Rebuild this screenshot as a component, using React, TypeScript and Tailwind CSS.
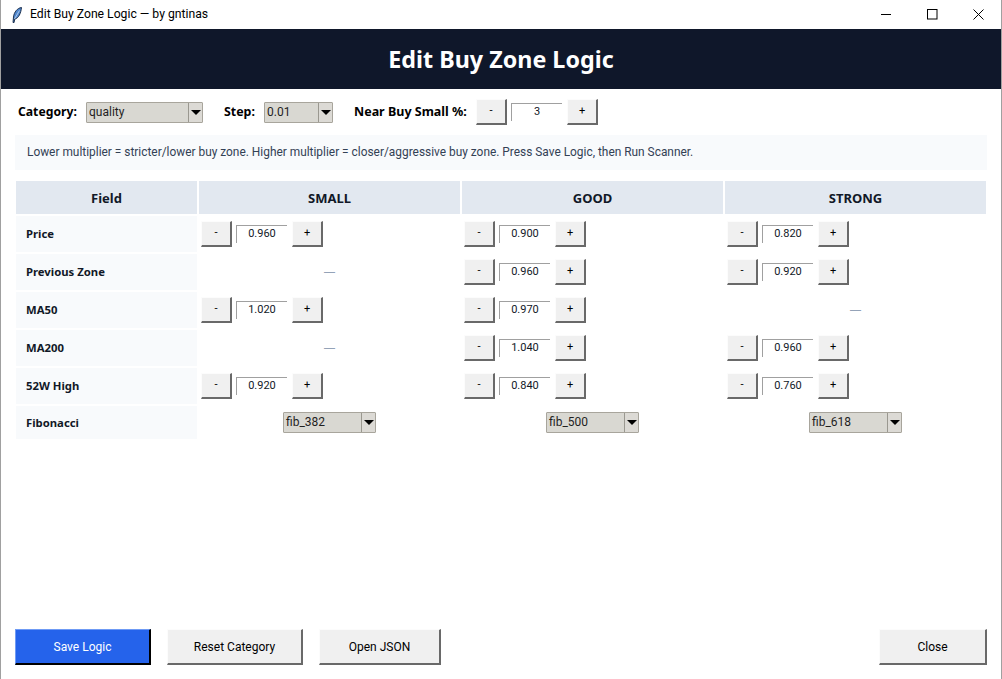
const FONT = "font-['Roboto','Noto_Sans',sans-serif]";
const BOLD = "font-['Noto_Sans','Open_Sans',sans-serif] font-bold";

const ROWS: { label: string; small: string | null; good: string; strong: string | null }[] = [
  { label: "Price", small: "0.960", good: "0.900", strong: "0.820" },
  { label: "Previous Zone", small: null, good: "0.960", strong: "0.920" },
  { label: "MA50", small: "1.020", good: "0.970", strong: null },
  { label: "MA200", small: null, good: "1.040", strong: "0.960" },
  { label: "52W High", small: "0.920", good: "0.840", strong: "0.760" },
];

function TkButton({ label, className = "" }: { label: string; className?: string }) {
  return (
    <button className={`flex items-center justify-center bg-[#f0f0f0] border border-t-[#fcfcfc] border-l-[#fcfcfc] border-r-2 border-b-2 border-r-[#696969] border-b-[#696969] text-black ${className}`}>
      {label}
    </button>
  );
}

function Stepper({ value }: { value: string }) {
  return (
    <div className="flex items-center">
      <TkButton label="-" className="w-[31px] h-[26px] text-[11px]" />
      <div className="ml-1 w-[51px] h-[26px] flex items-center justify-center text-[11px] text-[#111827]">
        <div className="w-full h-[18px] mb-[1px] border-t border-l border-[#a0a0a0] flex items-center justify-center">{value}</div>
      </div>
      <TkButton label="+" className="ml-[5px] w-[31px] h-[26px] text-[11px]" />
    </div>
  );
}

function Combo({ value, className = "" }: { value: string; className?: string }) {
  return (
    <div className={`flex h-[21px] border border-[#a8a59c] bg-[#d9d8d2] rounded-[1px] text-[12px] text-[#1f1f1f] ${className}`}>
      <div className="flex-1 pl-[2px] leading-[19px]">{value}</div>
      <div className="w-[14px] bg-[#dcdad5] border-l border-[#9a9890] flex items-center justify-center">
        <svg width="10" height="5" viewBox="0 0 10 5"><path d="M0 0h10L5 5z" fill="#000" /></svg>
      </div>
    </div>
  );
}

function Cell({ value }: { value: string | null }) {
  if (value === null) {
    return <div className="h-9 flex items-center justify-center font-['Noto_Sans',sans-serif] text-[12px] text-[#94a3b8]">—</div>;
  }
  return (
    <div className="h-9 flex items-center pl-[2px]">
      <Stepper value={value} />
    </div>
  );
}

function HeaderCell({ label }: { label: string }) {
  return (
    <div className={`h-[33px] pt-[2px] bg-[#e2e8f0] flex items-center justify-center text-[13px] text-[#111827] ${BOLD}`}>
      {label}
    </div>
  );
}

function Feather() {
  return (
    <svg width="10" height="16" viewBox="0 0 10 16">
      <path d="M9.500.500C5.500 1 2 5 1.500 10L1 15.500l1 .2.800-3.700C6.500 11.500 9 6 9.500.500z" fill="#4f86cc" stroke="#10233f" strokeWidth=".9" />
      <path d="M7.500 3.500L2.500 12" stroke="#d5e4f5" strokeWidth=".7" fill="none" />
    </svg>
  );
}

export default function App() {
  return (
    <div className={`${FONT} w-[1002px] h-[679px] flex flex-col bg-white border-x border-[#a0a0a0] overflow-hidden`}>
      {/* title bar */}
      <div className="h-[29px] flex items-center pl-[11px] shrink-0">
        <Feather />
        <span className="ml-2 text-[12.2px] text-black">Edit Buy Zone Logic — by gntinas</span>
        <div className="ml-auto flex items-center">
          <svg width="11" height="11" viewBox="0 0 11 11" className="mr-[35px]"><path d="M0 5.500h10" stroke="#000" /></svg>
          <svg width="11" height="11" viewBox="0 0 11 11" className="mr-[35px]"><rect x=".5" y=".5" width="9.500" height="9.500" fill="none" stroke="#000" /></svg>
          <svg width="11" height="11" viewBox="0 0 11 11" className="mr-[17px]"><path d="M.5.500l10 10M10.500.500l-10 10" stroke="#000" /></svg>
        </div>
      </div>

      {/* heading */}
      <div className={`h-[60px] shrink-0 bg-[#0f172a] flex items-center justify-center text-[23.3px] text-white ${BOLD}`}>
        Edit Buy Zone Logic
      </div>

      {/* toolbar */}
      <div className="flex items-center h-[26px] mt-[10px] pl-[17px] text-[12px] text-black shrink-0">
        <span className={`w-[68px] text-[12.2px] ${BOLD}`}>Category:</span>
        <Combo value="quality" className="w-[117px]" />
        <span className={`ml-[21px] w-[40px] text-[12.4px] ${BOLD}`}>Step:</span>
        <Combo value="0.01" className="w-[69px]" />
        <span className={`ml-[21px] w-[122px] text-[12.5px] ${BOLD}`}>Near Buy Small %:</span>
        <Stepper value="3" />
      </div>

      {/* note */}
      <div className="mt-[10px] mx-[14px] h-[35px] w-[972px] shrink-0 bg-[#f8fafc] flex items-center pl-3 text-[11.9px] text-[#334155]">
        Lower multiplier = stricter/lower buy zone. Higher multiplier = closer/aggressive buy zone. Press Save Logic, then Run Scanner.
      </div>

      {/* table */}
      <div className="mt-[11px] ml-[15px] grid grid-cols-[181px_261px_261px_261px] gap-[2px] shrink-0">
        <HeaderCell label="Field" />
        <HeaderCell label="SMALL" />
        <HeaderCell label="GOOD" />
        <HeaderCell label="STRONG" />
        {ROWS.map((r) => (
          <div key={r.label} className="contents">
            <div className={`h-9 bg-[#f8fafc] flex items-center pl-[10px] text-[11.3px] text-[#111827] ${BOLD}`}>{r.label}</div>
            <Cell value={r.small} />
            <Cell value={r.good} />
            <Cell value={r.strong} />
          </div>
        ))}
        <div className={`h-[33px] pt-[1px] bg-[#f8fafc] flex items-center pl-[10px] text-[11.3px] text-[#111827] ${BOLD}`}>Fibonacci</div>
        <div className="h-[33px] flex items-center justify-center"><Combo value="fib_382" className="w-[93px]" /></div>
        <div className="h-[33px] flex items-center justify-center"><Combo value="fib_500" className="w-[93px]" /></div>
        <div className="h-[33px] flex items-center justify-center"><Combo value="fib_618" className="w-[93px]" /></div>
      </div>

      {/* footer buttons */}
      <div className="mt-auto mb-[14px] mx-[14px] flex items-center shrink-0">
        <button className="w-[136px] h-9 bg-[#2563eb] border border-t-[#6f9bf5] border-l-[#6f9bf5] border-r-2 border-b-2 border-r-black border-b-black text-[12px] text-white">
          Save Logic
        </button>
        <TkButton label="Reset Category" className="ml-4 w-[136px] h-9 text-[12px]" />
        <TkButton label="Open JSON" className="ml-4 w-[122px] h-9 text-[12px]" />
        <TkButton label="Close" className="ml-auto w-[108px] h-9 text-[12px]" />
      </div>
    </div>
  );
}
